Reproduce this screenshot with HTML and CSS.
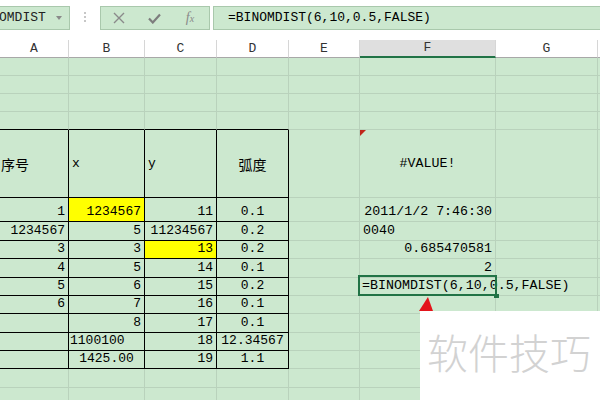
FILE: index.html
```html
<!DOCTYPE html>
<html>
<head>
<meta charset="utf-8">
<link rel="stylesheet" href="styles.css">
</head>
<body>
<div class="app">
  <div class="toolbar">
    <div class="namebox"><span class="name">OMDIST</span><span class="caret"></span></div>
    <div class="dots">
      <svg width="4" height="24" viewBox="0 0 4 24"><circle cx="2" cy="7" r="1" fill="#b5b5b5"/><circle cx="2" cy="11" r="1" fill="#b5b5b5"/><circle cx="2" cy="15" r="1" fill="#b5b5b5"/></svg>
    </div>
    <div class="btns">
      <span class="btn b1"><svg width="12" height="12" viewBox="0 0 12 12"><path d="M1 1L11 11M11 1L1 11" stroke="#8a8a8a" stroke-width="1.4" fill="none"/></svg></span>
      <span class="btn b2"><svg width="13" height="11" viewBox="0 0 13 11"><path d="M1 5.5L4.8 9.5L12 1.5" stroke="#7d7d7d" stroke-width="2.2" fill="none"/></svg></span>
      <span class="btn b3"><span class="fx">f<span class="fxs">x</span></span></span>
    </div>
    <div class="formula">=BINOMDIST(6,10,0.5,FALSE)</div>
  </div>

  <div class="sheet">
    <div class="h">A</div><div class="h">B</div><div class="h">C</div><div class="h">D</div><div class="h">E</div><div class="h sel">F</div><div class="h">G</div><div class="h"></div>

    <div class="c"></div><div class="c"></div><div class="c"></div><div class="c"></div><div class="c"></div><div class="c"></div><div class="c"></div><div class="c"></div>
    <div class="c"></div><div class="c"></div><div class="c"></div><div class="c"></div><div class="c"></div><div class="c"></div><div class="c"></div><div class="c"></div>
    <div class="c"></div><div class="c"></div><div class="c"></div><div class="c"></div><div class="c"></div><div class="c"></div><div class="c"></div><div class="c"></div>
    <div class="c tt"></div><div class="c tt"></div><div class="c tt"></div><div class="c tt"></div><div class="c"></div><div class="c"></div><div class="c"></div><div class="c"></div>

    <div class="c t mid cjk pl1">序号</div><div class="c t mid">x</div><div class="c t mid">y</div><div class="c t mid m cjk">弧度</div><div class="c"></div><div class="c mid m f comment">#VALUE!</div><div class="c"></div><div class="c"></div>

    <div class="c t r">1</div><div class="c t r yl">1234567</div><div class="c t r">11</div><div class="c t m">0.1</div><div class="c"></div><div class="c r f">2011/1/2 7:46:30</div><div class="c"></div><div class="c"></div>
    <div class="c t r">1234567</div><div class="c t r">5</div><div class="c t r">11234567</div><div class="c t m">0.2</div><div class="c"></div><div class="c f">0040</div><div class="c"></div><div class="c"></div>
    <div class="c t r">3</div><div class="c t r">3</div><div class="c t r yl">13</div><div class="c t m">0.2</div><div class="c"></div><div class="c r f">0.685470581</div><div class="c"></div><div class="c"></div>
    <div class="c t r">4</div><div class="c t r">5</div><div class="c t r">14</div><div class="c t m">0.1</div><div class="c"></div><div class="c r f">2</div><div class="c"></div><div class="c"></div>
    <div class="c t r">5</div><div class="c t r">6</div><div class="c t r">15</div><div class="c t m">0.2</div><div class="c"></div><div class="c f active">=BINOMDIST(6,10,0.5,FALSE)<span class="cursor"></span></div><div class="c"></div><div class="c"></div>
    <div class="c t r">6</div><div class="c t r">7</div><div class="c t r">16</div><div class="c t m">0.1</div><div class="c"></div><div class="c"></div><div class="c"></div><div class="c"></div>
    <div class="c t r"></div><div class="c t r">8</div><div class="c t r">17</div><div class="c t m">0.1</div><div class="c"></div><div class="c"></div><div class="c"></div><div class="c"></div>
    <div class="c t r"></div><div class="c t pl1">1100100</div><div class="c t r">18</div><div class="c t m">12.34567</div><div class="c"></div><div class="c"></div><div class="c"></div><div class="c"></div>
    <div class="c t r"></div><div class="c t m">1425.00</div><div class="c t r">19</div><div class="c t m">1.1</div><div class="c"></div><div class="c"></div><div class="c"></div><div class="c"></div>

    <div class="c"></div><div class="c"></div><div class="c"></div><div class="c"></div><div class="c"></div><div class="c"></div><div class="c"></div><div class="c"></div>
    <div class="c"></div><div class="c"></div><div class="c"></div><div class="c"></div><div class="c"></div><div class="c"></div><div class="c"></div><div class="c"></div>
  </div>

  <div class="arrow"></div>
  <div class="watermark">软件技巧</div>
</div>
</body>
</html>
```

FILE: styles.css
```css
* { box-sizing: border-box; }

body {
  margin: 0;
  font-family: "Liberation Mono", "DejaVu Sans Mono", monospace;
  font-size: 13px;
  color: #000;
  background: #fff;
}

.app {
  position: relative;
  width: 600px;
  height: 400px;
  overflow: hidden;
}

/* ---------- formula toolbar ---------- */
.toolbar {
  display: flex;
  align-items: flex-start;
  height: 40px;
  padding-top: 6px;
  background: #fff;
}

.namebox {
  width: 70px;
  height: 24px;
  background: #cce8cf;
  border: 1px solid #a9c8ac;
  border-left: 0;
  display: flex;
  align-items: center;
}

.name {
  margin-left: -1px;
  line-height: 22px;
  color: #222;
}

.caret {
  margin-left: auto;
  margin-right: 7px;
  border-left: 3px solid transparent;
  border-right: 3px solid transparent;
  border-top: 4px solid #8a8a8a;
}

.dots {
  width: 30px;
  height: 24px;
  display: flex;
  justify-content: center;
}

.btns {
  width: 110px;
  height: 24px;
  background: #cce8cf;
  border: 1px solid #a9c8ac;
  display: flex;
}

.btn {
  display: flex;
  align-items: center;
  justify-content: center;
}
.b1 { width: 36px; }
.b2 { width: 34px; }
.b3 { width: 38px; }

.fx {
  font-family: "Liberation Serif", serif;
  font-style: italic;
  font-size: 14px;
  color: #8a8a8a;
}
.fxs { font-size: 10px; }

.formula {
  flex: 1;
  margin-left: 3px;
  height: 24px;
  background: #cce8cf;
  border: 1px solid #a9c8ac;
  border-right: 0;
  padding-left: 14px;
  line-height: 22px;
  white-space: nowrap;
}

/* ---------- sheet ---------- */
.sheet {
  display: grid;
  grid-template-columns: 69px 76px 72px 72px 71px 136px 102px 1fr;
  grid-template-rows: 18px 18px 18px 18px 18px 68px 24px 19px 18px 19px 18px 18px 19px 18px 18px 19px 18px;
  background: #cce8cf;
}

.h {
  background: #fff;
  border-right: 1px solid #d6d6d6;
  border-bottom: 1px solid #a8a8a8;
  display: flex;
  align-items: center;
  justify-content: center;
  color: #333;
  line-height: 14px;
}
.h.sel {
  background: #dfdfdf;
  border-bottom: 2px solid #217346;
}

.c {
  position: relative;
  display: flex;
  align-items: flex-end;
  padding: 0 3px 2px 3px;
  line-height: 14px;
  white-space: nowrap;
  border-right: 1px solid #b9d2bc;
  border-bottom: 1px solid #b9d2bc;
}

.c.r { justify-content: flex-end; }
.c.m { justify-content: center; }
.c.mid { align-items: center; padding-bottom: 0; }
.c.pl1 { padding-left: 1px; }
.c.t { border-right-color: #000; border-bottom-color: #000; }
.c.tt { border-bottom-color: #000; }
.c.yl { background: #ffff00; }
.c.f { font-size: 13.3px; }

.cjk {
  font-family: "Noto Sans CJK SC", sans-serif;
  font-size: 14px;
}

.comment::before {
  content: "";
  position: absolute;
  top: 0;
  left: 0;
  border-top: 6px solid #c0261b;
  border-right: 6px solid transparent;
}

.active {
  z-index: 2;
  padding-left: 2px;
}
.active::after {
  content: "";
  position: absolute;
  top: -3px;
  left: -2px;
  right: -2px;
  bottom: -1px;
  border: 2px solid #217346;
}
.active::before {
  content: "";
  position: absolute;
  right: -4px;
  bottom: -3px;
  width: 5px;
  height: 4px;
  background: #217346;
}

.cursor {
  display: inline-block;
  width: 1px;
  height: 16px;
  margin-left: 3px;
  margin-bottom: -1px;
  background: #000;
}

/* ---------- overlays ---------- */
.arrow {
  position: absolute;
  left: 419px;
  top: 297px;
  width: 14px;
  height: 14px;
  background: #e3141b;
  clip-path: polygon(64% 0, 0 100%, 100% 100%);
}

.watermark {
  position: absolute;
  left: 420px;
  top: 311px;
  right: 0;
  bottom: 0;
  background: #fff;
  padding: 20px 0 0 7px;
  font-family: "Noto Sans CJK SC", sans-serif;
  font-weight: 300;
  font-size: 41px;
  line-height: 41px;
  color: #d2d2d2;
  white-space: nowrap;
}
```
